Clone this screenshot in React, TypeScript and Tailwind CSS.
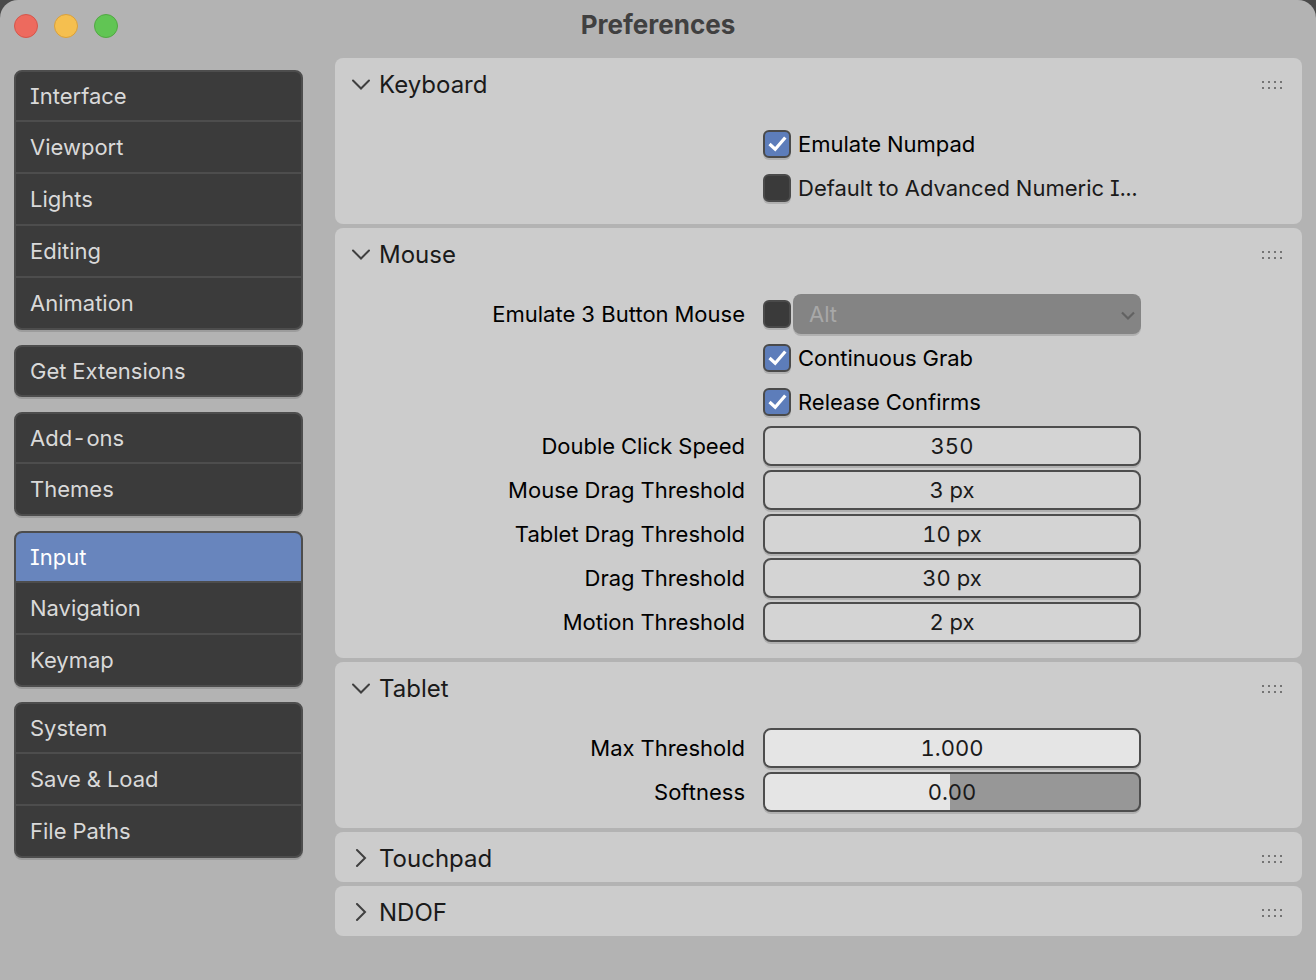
import { useState, type ReactNode } from "react";

const navGroups: string[][] = [
  ["Interface", "Viewport", "Lights", "Editing", "Animation"],
  ["Get Extensions"],
  ["Add-ons", "Themes"],
  ["Input", "Navigation", "Keymap"],
  ["System", "Save & Load", "File Paths"],
];

function Sidebar() {
  const [active, setActive] = useState("Input");
  return (
    <nav aria-label="Sections" className="flex w-[289px] shrink-0 flex-col gap-[15px] pt-3">
      {navGroups.map((group) => (
        <div
          key={group[0]}
          className="flex flex-col divide-y-2 divide-[#4d4d4d] overflow-hidden rounded-lg border-2 border-[#4d4d4d] bg-[#3b3b3b] shadow-[0_2px_0_#9c9c9c]"
        >
          {group.map((item) => (
            <button
              key={item}
              type="button"
              onClick={() => setActive(item)}
              className={
                item === active
                  ? "h-[52px] bg-[#6885bd] px-3.5 text-left text-white first:h-[50px] last:h-[50px] only:h-12"
                  : "h-[52px] px-3.5 text-left text-[#d9d9d9] first:h-[50px] last:h-[50px] only:h-12"
              }
            >
              {item}
            </button>
          ))}
        </div>
      ))}
    </nav>
  );
}

function Chevron({ open }: { open: boolean }) {
  return (
    <svg width="20" height="20" viewBox="0 0 20 20" fill="none" stroke="#3f3f3f" strokeWidth="2" strokeLinecap="round" aria-hidden="true">
      <path d={open ? "M2 5.5 L10 13.5 L18 5.5" : "M6 1 L14 9 L6 17"} />
    </svg>
  );
}

function Grip() {
  return (
    <svg width="20" height="8" viewBox="0 0 20 8" fill="#747474" aria-hidden="true">
      {[0, 6, 12, 18].map((x) => (
        <g key={x}>
          <rect x={x} y="0" width="2" height="2" />
          <rect x={x} y="6" width="2" height="2" />
        </g>
      ))}
    </svg>
  );
}

function Panel({ title, children }: { title: string; children?: ReactNode }) {
  const [open, setOpen] = useState(children !== undefined);
  return (
    <section className="rounded-lg bg-[#cccccc]">
      <button
        type="button"
        aria-expanded={open}
        onClick={() => setOpen(!open)}
        className="flex h-[50px] w-full items-center gap-2 pt-1 pr-5 pl-4 text-left text-2xl text-[#1a1a1a]"
      >
        <Chevron open={open} />
        <span className="flex-1">{title}</span>
        <Grip />
      </button>
      {open && children && <div className="flex flex-col gap-1 py-4">{children}</div>}
    </section>
  );
}

function Row({ label, htmlFor, children }: { label?: string; htmlFor?: string; children: ReactNode }) {
  return (
    <div className="grid h-10 grid-cols-[410fr_378fr_143fr] items-center gap-x-[18px]">
      {label ? (
        <label htmlFor={htmlFor} className="text-right whitespace-nowrap text-black">
          {label}
        </label>
      ) : (
        <span />
      )}
      {children}
    </div>
  );
}

function Check({ id, defaultChecked }: { id: string; defaultChecked?: boolean }) {
  return (
    <span className="relative block size-7 shrink-0">
      <input
        id={id}
        type="checkbox"
        defaultChecked={defaultChecked}
        className="peer block size-7 appearance-none rounded-md border-2 border-[#4a4a4a] bg-[#3a3a3a] shadow-[0_2px_0_#b0b0b0] checked:bg-[#5d7dba]"
      />
      <svg
        viewBox="0 0 28 28"
        className="pointer-events-none absolute inset-0 hidden size-7 peer-checked:block"
        fill="none"
        stroke="#ffffff"
        strokeWidth="3.2"
        aria-hidden="true"
      >
        <path d="M6.5 14 L12.2 19.2 L22.3 7.5" />
      </svg>
    </span>
  );
}

function CheckRow({ id, text, defaultChecked }: { id: string; text: string; defaultChecked?: boolean }) {
  return (
    <Row>
      <div className="flex items-center gap-[7px]">
        <Check id={id} defaultChecked={defaultChecked} />
        <label htmlFor={id} className={defaultChecked ? "whitespace-nowrap text-black" : "whitespace-nowrap text-[#1a1a1a]"}>
          {text}
        </label>
      </div>
    </Row>
  );
}

function NumberRow({ id, label, value }: { id: string; label: string; value: string }) {
  return (
    <Row label={label} htmlFor={id}>
      <input
        id={id}
        type="text"
        defaultValue={value}
        className="h-10 w-full min-w-0 rounded-lg border-2 border-[#4d4d4d] bg-[#d4d4d4] text-center text-[#1a1a1a] shadow-[0_2px_0_#b0b0b0]"
      />
    </Row>
  );
}

function SliderRow({ id, label, min, digits, initial }: { id: string; label: string; min: number; digits: number; initial: number }) {
  const [value, setValue] = useState(initial);
  const percent = ((value - min) / (1 - min)) * 100;
  return (
    <Row label={label} htmlFor={id}>
      <div className="relative h-10 overflow-hidden rounded-lg border-2 border-[#4d4d4d] bg-[#979797] shadow-[0_2px_0_#b0b0b0]">
        <div className="h-full bg-[#e5e5e5]" style={{ width: percent < 100 ? `calc(${percent}% - 2px)` : "100%" }} />
        <input
          id={id}
          type="range"
          min={min}
          max={1}
          step={0.01}
          value={value}
          onChange={(e) => setValue(Number(e.target.value))}
          className="absolute inset-0 size-full appearance-none opacity-0"
        />
        <output htmlFor={id} className="pointer-events-none absolute inset-0 flex items-center justify-center text-[#1a1a1a]">
          {value.toFixed(digits)}
        </output>
      </div>
    </Row>
  );
}

export default function App() {
  return (
    <div className="min-h-screen bg-[#4a4a4a] font-['Inter','Liberation_Sans',sans-serif] text-[22px] leading-7 tabular-nums [font-feature-settings:'cv08']">
      <div className="min-h-screen rounded-t-[18px] bg-[#b3b3b3]">
        <header className="grid h-[58px] grid-cols-[1fr_auto_1fr] items-start px-3.5">
          <div className="flex gap-4 pt-3.5">
            <button type="button" aria-label="Close" className="size-6 rounded-full border border-[#d5564b] bg-[#ed6a5e]" />
            <button type="button" aria-label="Minimize" className="size-6 rounded-full border border-[#d9a03c] bg-[#f5bf4f]" />
            <button type="button" aria-label="Zoom" className="size-6 rounded-full border border-[#52a843] bg-[#61c554]" />
          </div>
          <h1 className="pt-[11px] text-[26px] leading-7 font-bold text-[#404040]">Preferences</h1>
        </header>
        <div className="flex gap-8 px-3.5 pb-11">
          <Sidebar />
          <main className="flex min-w-0 flex-1 flex-col gap-1">
            <Panel title="Keyboard">
              <CheckRow id="numpad" text="Emulate Numpad" defaultChecked />
              <CheckRow id="numeric" text="Default to Advanced Numeric I..." />
            </Panel>
            <Panel title="Mouse">
              <Row label="Emulate 3 Button Mouse" htmlFor="three-button">
                <div className="flex items-center gap-0.5">
                  <Check id="three-button" />
                  <div className="relative flex-1">
                    <select
                      disabled
                      aria-label="Emulation modifier"
                      className="block h-10 w-full appearance-none rounded-lg bg-[#848484] px-4 text-[#a8a8a8] opacity-100 shadow-[0_2px_0_#b0b0b0]"
                    >
                      <option>Alt</option>
                    </select>
                    <svg
                      width="14"
                      height="10"
                      viewBox="0 0 14 10"
                      className="pointer-events-none absolute top-[17px] right-1.5"
                      fill="none"
                      stroke="#626262"
                      strokeWidth="2.2"
                      aria-hidden="true"
                    >
                      <path d="M1 1.5 L7 7.5 L13 1.5" />
                    </svg>
                  </div>
                </div>
              </Row>
              <CheckRow id="grab" text="Continuous Grab" defaultChecked />
              <CheckRow id="release" text="Release Confirms" defaultChecked />
              <NumberRow id="double-click" label="Double Click Speed" value="350" />
              <NumberRow id="mouse-drag" label="Mouse Drag Threshold" value="3 px" />
              <NumberRow id="tablet-drag" label="Tablet Drag Threshold" value="10 px" />
              <NumberRow id="drag" label="Drag Threshold" value="30 px" />
              <NumberRow id="motion" label="Motion Threshold" value="2 px" />
            </Panel>
            <Panel title="Tablet">
              <SliderRow id="max-threshold" label="Max Threshold" min={0} digits={3} initial={1} />
              <SliderRow id="softness" label="Softness" min={-1} digits={2} initial={0} />
            </Panel>
            <Panel title="Touchpad" />
            <Panel title="NDOF" />
          </main>
        </div>
      </div>
    </div>
  );
}
